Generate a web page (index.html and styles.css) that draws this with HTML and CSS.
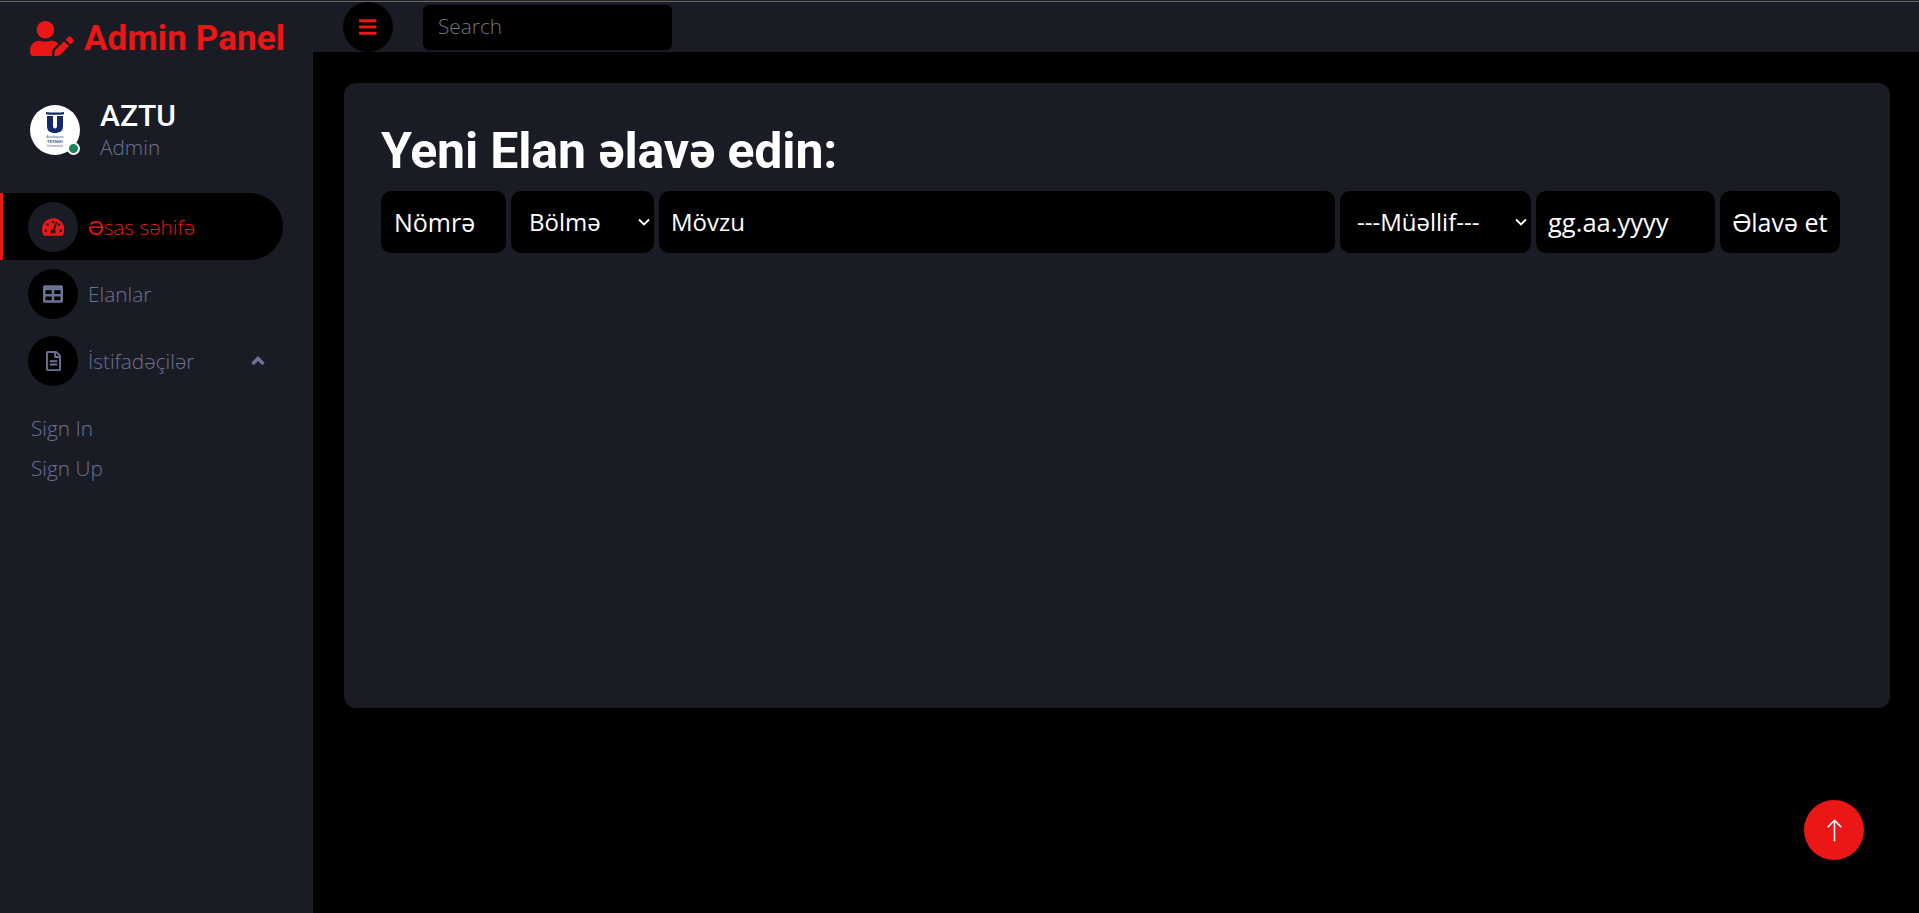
FILE: index.html
```html
<!DOCTYPE html>
<html lang="az">
<head>
    <meta charset="UTF-8">
    <meta name="viewport" content="width=device-width, initial-scale=1.0">
    <title>Admin Panel</title>
    <link rel="stylesheet" href="styles.css">
</head>
<body>
    <div class="top-line"></div>
    <div class="wrapper">
        <aside class="sidebar">
            <a class="brand" href="#">
                <svg class="brand-icon" viewBox="0 0 640 512"><path d="M224 256c70.7 0 128-57.3 128-128S294.7 0 224 0 96 57.3 96 128s57.3 128 128 128zm89.6 32h-16.7c-22.2 10.2-46.9 16-72.9 16s-50.6-5.8-72.9-16h-16.7C60.2 288 0 348.2 0 422.4V464c0 26.5 21.5 48 48 48h274.9c-2.4-6.8-3.4-14-2.6-21.3l6.8-60.9 1.2-11.1 7.9-7.9 77.3-77.3c-24.5-27.7-60-45.5-99.9-45.5zm45.3 145.3l-6.8 61c-1.1 10.2 7.5 18.8 17.6 17.6l60.9-6.8 137.9-137.9-71.7-71.7-137.9 137.8zM633 268.9L595.1 231c-9.3-9.3-24.5-9.3-33.8 0l-37.8 37.8-4.1 4.1 71.8 71.7 41.8-41.8c9.3-9.4 9.3-24.5 0-33.9z"/></svg>
                <span>Admin Panel</span>
            </a>

            <div class="profile">
                <div class="avatar">
                    <svg viewBox="0 0 50 50">
                        <circle cx="25" cy="25" r="25" fill="#fff"/>
                        <path d="M16 7c3 .8 15 .8 18 0v2.2c-3 .7-15 .7-18 0z" fill="#14296b"/>
                        <path d="M17 11h6v10c0 1.500.7 2.500 2 2.500s2-1 2-2.500V11h6v10c0 5-3 7-8 7s-8-2-8-7z" fill="#14296b"/>
                        <text x="25" y="33" class="logo-small">Azərbaycan</text>
                        <text x="25" y="38" class="logo-bold">TEXNİKİ</text>
                        <text x="25" y="42" class="logo-small">Universiteti</text>
                    </svg>
                    <span class="status-dot"></span>
                </div>
                <div class="profile-text">
                    <h6>AZTU</h6>
                    <span>Admin</span>
                </div>
            </div>

            <nav class="nav">
                <a class="nav-item active" href="#">
                    <span class="nav-circle">
                        <svg class="icon" viewBox="0 0 576 512"><path d="M288 32C128.94 32 0 160.94 0 320c0 52.8 14.25 102.26 39.06 144.8 5.61 9.62 16.3 15.2 27.44 15.2h443c11.14 0 21.83-5.58 27.44-15.2C561.75 422.26 576 372.8 576 320c0-159.06-128.94-288-288-288zm0 64c14.71 0 26.58 10.13 30.32 23.65-1.11 2.26-2.64 4.23-3.45 6.67l-9.22 27.67c-5.13 3.49-10.97 6.01-17.64 6.01-17.67 0-32-14.33-32-32S270.33 96 288 96zM96 384c-17.67 0-32-14.33-32-32s14.33-32 32-32 32 14.33 32 32-14.33 32-32 32zm48-160c-17.67 0-32-14.33-32-32s14.33-32 32-32 32 14.33 32 32-14.33 32-32 32zm246.77-72.41l-61.33 184C343.13 347.33 352 364.54 352 384c0 11.72-3.38 22.55-8.88 32H232.88c-5.5-9.45-8.88-20.28-8.88-32 0-33.94 26.5-61.43 59.9-63.59l61.34-184.01c4.17-12.56 17.73-19.45 30.36-15.17 12.57 4.19 19.35 17.79 15.17 30.36zm14.66 57.2l15.52-46.55c3.47-1.29 7.13-2.23 11.05-2.23 17.67 0 32 14.33 32 32s-14.33 32-32 32c-11.38-.01-20.89-6.28-26.57-15.22zM480 384c-17.67 0-32-14.33-32-32s14.33-32 32-32 32 14.33 32 32-14.33 32-32 32z"/></svg>
                    </span>
                    Əsas səhifə
                </a>
                <a class="nav-item" href="#">
                    <span class="nav-circle">
                        <svg class="icon" viewBox="0 0 512 512"><path d="M464 32H48C21.49 32 0 53.49 0 80v352c0 26.51 21.49 48 48 48h416c26.51 0 48-21.49 48-48V80c0-26.51-21.49-48-48-48zM224 416H64v-96h160v96zm0-160H64v-96h160v96zm224 160H288v-96h160v96zm0-160H288v-96h160v96z"/></svg>
                    </span>
                    Elanlar
                </a>
                <a class="nav-item" href="#">
                    <span class="nav-circle">
                        <svg class="icon" viewBox="0 0 384 512"><path d="M288 248v28c0 6.6-5.4 12-12 12H108c-6.6 0-12-5.4-12-12v-28c0-6.6 5.4-12 12-12h168c6.6 0 12 5.4 12 12zm-12 72H108c-6.6 0-12 5.4-12 12v28c0 6.6 5.4 12 12 12h168c6.6 0 12-5.4 12-12v-28c0-6.6-5.4-12-12-12zm108-188.1V464c0 26.5-21.5 48-48 48H48c-26.5 0-48-21.5-48-48V48C0 21.5 21.500 0 48 0h204.1C264.8 0 277 5.1 286 14.1L369.9 98c9 8.9 14.1 21.2 14.1 33.9zm-128-80V128h76.1L256 51.9zM336 464V176H232c-13.3 0-24-10.7-24-24V48H48v416h288z"/></svg>
                    </span>
                    İstifadəçilər
                    <svg class="chevron" viewBox="0 0 14 10"><path d="M1.500 8 7 2.500 12.500 8"/></svg>
                </a>
                <div class="sub-menu">
                    <a href="#">Sign In</a>
                    <a href="#">Sign Up</a>
                </div>
            </nav>
        </aside>

        <div class="content">
            <header class="topbar">
                <a class="menu-toggle" href="#">
                    <svg class="icon" viewBox="0 0 448 512"><path d="M16 132h416c8.837 0 16-7.163 16-16V76c0-8.837-7.163-16-16-16H16C7.163 60 0 67.163 0 76v40c0 8.837 7.163 16 16 16zm0 160h416c8.837 0 16-7.163 16-16v-40c0-8.837-7.163-16-16-16H16c-8.837 0-16 7.163-16 16v40c0 8.837 7.163 16 16 16zm0 160h416c8.837 0 16-7.163 16-16v-40c0-8.837-7.163-16-16-16H16c-8.837 0-16 7.163-16 16v40c0 8.837 7.163 16 16 16z"/></svg>
                </a>
                <input class="search" type="search" placeholder="Search">
            </header>

            <main class="main">
                <section class="card">
                    <h1>Yeni Elan əlavə edin:</h1>
                    <form class="elan-form">
                        <input class="field f-number" type="text" placeholder="Nömrə">
                        <select class="field f-section">
                            <option>Bölmə</option>
                        </select>
                        <input class="field f-topic" type="text" placeholder="Mövzu">
                        <select class="field f-author">
                            <option>---Müəllif---</option>
                        </select>
                        <input class="field f-date" type="text" placeholder="gg.aa.yyyy">
                        <button class="field f-submit" type="submit">Əlavə et</button>
                    </form>
                </section>
            </main>
        </div>
    </div>

    <a class="back-to-top" href="#">
        <svg viewBox="0 0 16 16"><path d="M8 15a.5.5 0 0 0 .5-.5V2.707l3.146 3.147a.5.5 0 0 0 .708-.708l-4-4a.5.5 0 0 0-.708 0l-4 4a.5.5 0 1 0 .708.708L7.5 2.707V14.5A.5.5 0 0 0 8 15z"/></svg>
    </a>
</body>
</html>
```

FILE: styles.css
```css
* {
    box-sizing: border-box;
}

html, body {
    height: 100%;
}

body {
    margin: 0;
    display: flex;
    flex-direction: column;
    overflow: hidden;
    background-color: #000;
    color: #6c7293;
    font-family: 'Open Sans', sans-serif;
    font-size: 20.8px;
    font-weight: 300;
}

a {
    color: inherit;
    text-decoration: none;
}

.top-line {
    height: 2px;
    flex-shrink: 0;
    border-top: 1px solid #222;
    background-color: #666;
}

.wrapper {
    flex: 1;
    display: flex;
    min-height: 0;
}

/* Sidebar */
.sidebar {
    width: 313px;
    flex-shrink: 0;
    padding-right: 30px;
    background-color: #191c24;
}

.brand {
    display: flex;
    align-items: center;
    gap: 10px;
    height: 72px;
    padding-left: 30px;
    color: #eb1616;
    font-family: 'Roboto', sans-serif;
    font-size: 35px;
    font-weight: 700;
    letter-spacing: 0.1px;
    white-space: nowrap;
}

.brand-icon {
    flex-shrink: 0;
    width: 44px;
    height: 35px;
    fill: #eb1616;
}

.profile {
    display: flex;
    align-items: center;
    gap: 20px;
    margin-top: 24.5px;
    padding-left: 30px;
}

.avatar {
    position: relative;
    width: 50px;
    height: 50px;
}

.avatar svg {
    display: block;
}

.logo-small,
.logo-bold {
    font-family: 'Liberation Sans', sans-serif;
    text-anchor: middle;
    fill: #4a5578;
}

.logo-small {
    font-size: 3.2px;
}

.logo-bold {
    font-size: 4px;
    font-weight: 700;
}

.status-dot {
    position: absolute;
    right: 0;
    bottom: 0;
    width: 13px;
    height: 13px;
    border: 2px solid #fff;
    border-radius: 50%;
    background-color: #198754;
}

.profile-text h6 {
    margin: 0;
    color: #fff;
    font-family: 'Roboto', sans-serif;
    font-size: 30px;
    font-weight: 500;
    line-height: 34px;
}

.profile-text span {
    display: block;
    line-height: 29px;
}

.nav {
    margin-top: 31.5px;
}

.nav-item {
    display: flex;
    align-items: center;
    height: 67px;
    padding: 0 18px 0 25px;
    border-left: 3px solid transparent;
    border-radius: 0 40px 40px 0;
}

.nav-item.active {
    border-left-color: #eb1616;
    background-color: #000;
    color: #eb1616;
}

.nav-circle {
    display: flex;
    align-items: center;
    justify-content: center;
    width: 50px;
    height: 50px;
    margin-right: 10px;
    border-radius: 50%;
    background-color: #000;
}

.nav-item.active .nav-circle {
    background-color: #191c24;
}

.icon {
    height: 20px;
    fill: currentColor;
}

.chevron {
    width: 14px;
    height: 10px;
    margin-left: auto;
    fill: none;
    stroke: currentColor;
    stroke-width: 3.5;
}

.sub-menu {
    padding-top: 14px;
}

.sub-menu a {
    display: block;
    height: 40px;
    padding-left: 31px;
    line-height: 40px;
}

/* Top bar */
.content {
    flex: 1;
    min-width: 0;
}

.topbar {
    display: flex;
    align-items: center;
    gap: 30px;
    height: 50px;
    padding-left: 30px;
    background-color: #191c24;
}

.menu-toggle {
    display: flex;
    align-items: center;
    justify-content: center;
    width: 50px;
    height: 50px;
    border-radius: 50%;
    background-color: #000;
    color: #eb1616;
}

.search {
    width: 249px;
    height: 45px;
    padding: 0 15px 2px;
    border: 0;
    border-radius: 6px;
    outline: none;
    background-color: #000;
    color: #fff;
    font-family: inherit;
    font-size: 20.8px;
    font-weight: 300;
}

.search::placeholder {
    color: #6c757d;
}

/* Main card */
.main {
    padding: 31px 29px 0 31px;
}

.card {
    height: 625px;
    padding: 37.5px 37px;
    border-radius: 12px;
    background-color: #191c24;
}

.card h1 {
    margin: 0 0 10px;
    color: #fff;
    font-family: 'Roboto', sans-serif;
    font-size: 50px;
    font-weight: 700;
    letter-spacing: -0.15px;
    line-height: 60px;
}

.elan-form {
    display: flex;
    gap: 5px;
}

.field {
    height: 62px;
    padding: 0 12px;
    border: 0;
    border-radius: 10px;
    outline: none;
    background-color: #000;
    color: #fff;
    font-family: inherit;
    font-size: 24px;
    font-weight: 400;
}

.field::placeholder {
    color: #fff;
    opacity: 1;
}

select.field {
    appearance: none;
    padding-left: 17px;
    background-image: url("data:image/svg+xml,%3Csvg xmlns='http://www.w3.org/2000/svg' viewBox='0 0 12 8'%3E%3Cpath d='M1 1.500 6 6.500 11 1.500' fill='none' stroke='%23fff' stroke-width='1.800'/%3E%3C/svg%3E");
    background-repeat: no-repeat;
    background-position: right 4px center;
    background-size: 12px 8px;
}

.f-number {
    width: 125px;
    padding-left: 13px;
    font-size: 25px;
}

select.f-section {
    width: 143px;
    padding-left: 18px;
}

.f-topic {
    width: 676px;
}

.f-author {
    width: 191px;
}

.f-date {
    width: 179px;
    font-size: 25.5px;
}

.f-submit {
    width: 120px;
    padding: 0;
    font-size: 25px;
}

.back-to-top {
    position: fixed;
    right: 55px;
    bottom: 53px;
    display: flex;
    align-items: center;
    justify-content: center;
    width: 60px;
    height: 60px;
    border-radius: 50%;
    background-color: #eb1616;
}

.back-to-top svg {
    width: 25px;
    height: 25px;
    fill: #fff;
}
```
